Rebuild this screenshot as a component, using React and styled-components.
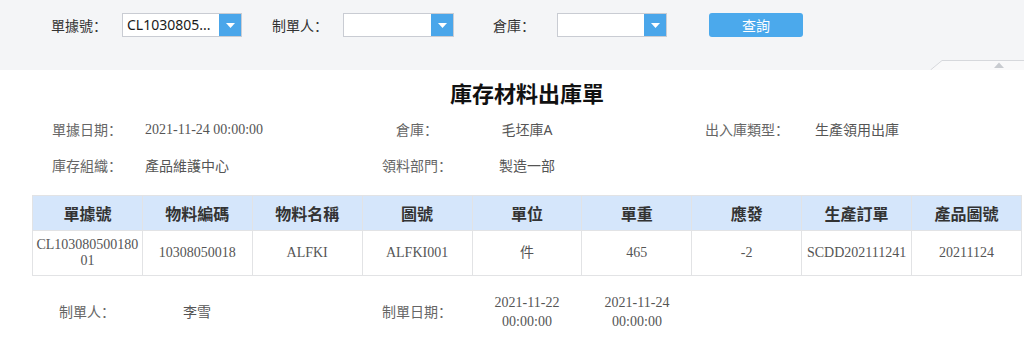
import React from "react";
import styled, { createGlobalStyle } from "styled-components";

const GlobalStyle = createGlobalStyle`
  html, body {
    margin: 0;
    padding: 0;
    background: #fff;
  }
  body {
    font-family: "Noto Sans", "Noto Sans CJK SC", sans-serif;
  }
`;

const SERIF = `"Liberation Serif", "Noto Sans CJK SC", serif`;

const Toolbar = styled.div`
  position: relative;
  height: 70px;
  box-sizing: border-box;
  padding: 13px 0 0 51px;
  background: #f4f5f7;
  display: flex;
  align-items: flex-start;
`;

const Field = styled.div`
  display: flex;
  align-items: center;
  height: 24px;
  margin-right: ${(p) => p.$gap}px;
`;

const FieldLabel = styled.span`
  font-size: 14px;
  color: #333;
  white-space: nowrap;
  margin-right: ${(p) => p.$space}px;
`;

const Select = styled.div`
  display: flex;
  width: ${(p) => p.$width}px;
  height: 24px;
  box-sizing: border-box;
  border: 1px solid #c9ccd3;
  background: #fff;
`;

const SelectText = styled.div`
  flex: 1;
  padding: 0 4px;
  font-size: 14px;
  line-height: 22px;
  color: #1a1a1a;
  white-space: nowrap;
  overflow: hidden;
`;

const SelectArrow = styled.div`
  width: 22px;
  background: #4aa6ea;
  display: flex;
  align-items: center;
  justify-content: center;
`;

const QueryButton = styled.button`
  width: 94px;
  height: 24px;
  border: none;
  border-radius: 3px;
  background: #4ba9ec;
  color: #fff;
  font-family: inherit;
  font-size: 14px;
  padding: 0;
`;

const CollapseHandle = styled.svg`
  position: absolute;
  right: 0;
  bottom: 0;
`;

const Sheet = styled.div`
  padding-left: 32px;
  width: 990px;
`;

const Title = styled.h1`
  margin: 8px 0 0;
  font-size: 22px;
  line-height: 30px;
  font-weight: bold;
  color: #111;
  text-align: center;
`;

const InfoGrid = styled.div`
  display: grid;
  grid-template-columns: repeat(9, 110px);
  grid-auto-rows: ${(p) => p.$rowHeight}px;
  align-items: center;
  margin-top: ${(p) => p.$top}px;
`;

const Cell = styled.div`
  padding: 0 3px;
  font-size: 14px;
  color: ${(p) => (p.$label ? "#666" : "#555")};
  text-align: ${(p) => p.$align || "center"};
  font-family: ${(p) => (p.$serif ? SERIF : "inherit")};
  line-height: ${(p) => (p.$wrap ? "19px" : "20px")};
  white-space: ${(p) => (p.$wrap ? "normal" : "nowrap")};
`;

const Table = styled.table`
  margin-top: 11px;
  width: 990px;
  table-layout: fixed;
  border-collapse: collapse;

  th,
  td {
    border: 1px solid #e2e3e5;
    text-align: center;
    padding: 0 2px;
  }

  th {
    height: 34px;
    background: #d5e6fb;
    color: #333;
    font-size: 16px;
    font-weight: bold;
  }

  td {
    height: 44px;
    color: #555;
    font-family: ${SERIF};
    font-size: 14px;
    line-height: 16px;
    word-break: break-all;
  }
`;

const columns = ["單據號", "物料編碼", "物料名稱", "圖號", "單位", "單重", "應發", "生產訂單", "產品圖號"];
const rows = [
  ["CL10308050018001", "10308050018", "ALFKI", "ALFKI001", "件", "465", "-2", "SCDD202111241", "20211124"],
];

function ArrowDown() {
  return (
    <svg width="9" height="5" viewBox="0 0 9 5">
      <path d="M0 0H9L4.5 5Z" fill="#fff" />
    </svg>
  );
}

export default function App() {
  return (
    <>
      <GlobalStyle />
      <Toolbar>
        <Field $gap={30}>
          <FieldLabel $space={15}>單據號：</FieldLabel>
          <Select $width={120}>
            <SelectText>CL1030805...</SelectText>
            <SelectArrow>
              <ArrowDown />
            </SelectArrow>
          </Select>
        </Field>
        <Field $gap={39}>
          <FieldLabel $space={15}>制單人：</FieldLabel>
          <Select $width={111}>
            <SelectText />
            <SelectArrow>
              <ArrowDown />
            </SelectArrow>
          </Select>
        </Field>
        <Field $gap={42}>
          <FieldLabel $space={22}>倉庫：</FieldLabel>
          <Select $width={110}>
            <SelectText />
            <SelectArrow>
              <ArrowDown />
            </SelectArrow>
          </Select>
        </Field>
        <QueryButton>查詢</QueryButton>
        <CollapseHandle width="94" height="10" viewBox="0 0 94 10">
          <path d="M0 10L12 0.5H94V10Z" fill="#f9f9fa" />
          <path d="M0.5 10L12 0.5H94" fill="none" stroke="#d6d8dc" />
          <path d="M64 8L69 2.5L74 8Z" fill="#c8cbd0" />
        </CollapseHandle>
      </Toolbar>

      <Sheet>
        <Title>庫存材料出庫單</Title>

        <InfoGrid $rowHeight={36} $top={4}>
          <Cell $label>單據日期：</Cell>
          <Cell $align="left" $serif>2021-11-24 00:00:00</Cell>
          <Cell />
          <Cell $label>倉庫：</Cell>
          <Cell>毛坯庫A</Cell>
          <Cell />
          <Cell $label>出入庫類型：</Cell>
          <Cell>生產領用出庫</Cell>
          <Cell />

          <Cell $label>庫存組織：</Cell>
          <Cell $align="left">產品維護中心</Cell>
          <Cell />
          <Cell $label>領料部門：</Cell>
          <Cell>製造一部</Cell>
        </InfoGrid>

        <Table>
          <thead>
            <tr>
              {columns.map((c) => (
                <th key={c}>{c}</th>
              ))}
            </tr>
          </thead>
          <tbody>
            {rows.map((r, i) => (
              <tr key={i}>
                {r.map((v, j) => (
                  <td key={j}>{v}</td>
                ))}
              </tr>
            ))}
          </tbody>
        </Table>

        <InfoGrid $rowHeight={40} $top={16}>
          <Cell $label>制單人：</Cell>
          <Cell>李雪</Cell>
          <Cell />
          <Cell $label>制單日期：</Cell>
          <Cell $serif $wrap>2021-11-22 00:00:00</Cell>
          <Cell $serif $wrap>2021-11-24 00:00:00</Cell>
        </InfoGrid>
      </Sheet>
    </>
  );
}
